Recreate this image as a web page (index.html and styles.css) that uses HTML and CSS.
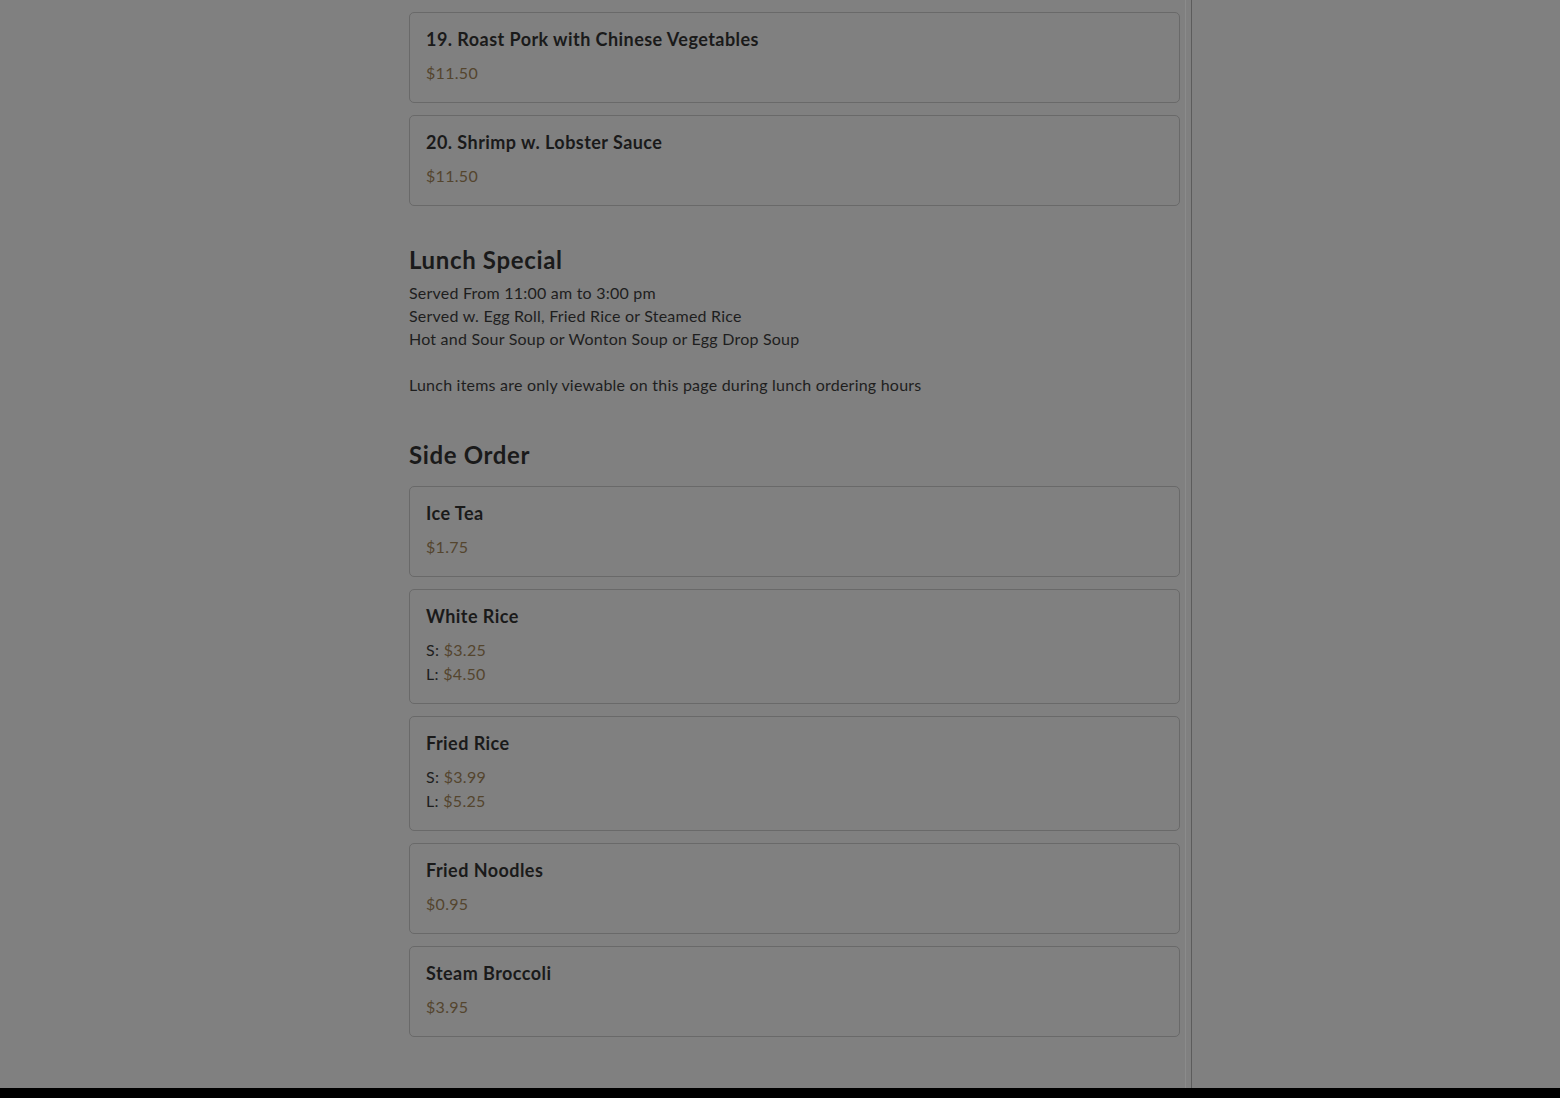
FILE: index.html
```html
<!DOCTYPE html>
<html lang="en">
<head>
<meta charset="utf-8">
<title>Menu</title>
<link rel="stylesheet" href="styles.css">
</head>
<body>
<div class="page">
  <main class="main">
    <div class="content">
      <div class="items">
        <div class="card">
          <div class="title">19. Roast Pork with Chinese Vegetables</div>
          <div class="price">$11.50</div>
        </div>
        <div class="card">
          <div class="title">20. Shrimp w. Lobster Sauce</div>
          <div class="price">$11.50</div>
        </div>
      </div>

      <section class="section lunch">
        <h2 class="heading">Lunch Special</h2>
        <p class="desc">Served From 11:00 am to 3:00 pm<br>Served w. Egg Roll, Fried Rice or Steamed Rice<br>Hot and Sour Soup or Wonton Soup or Egg Drop Soup<br><br>Lunch items are only viewable on this page during lunch ordering hours</p>
      </section>

      <section class="section side">
        <h2 class="heading">Side Order</h2>
        <div class="items">
          <div class="card">
            <div class="title">Ice Tea</div>
            <div class="price">$1.75</div>
          </div>
          <div class="card">
            <div class="title">White Rice</div>
            <div class="price"><span class="size">S:</span> $3.25</div>
            <div class="price"><span class="size">L:</span> $4.50</div>
          </div>
          <div class="card">
            <div class="title">Fried Rice</div>
            <div class="price"><span class="size">S:</span> $3.99</div>
            <div class="price"><span class="size">L:</span> $5.25</div>
          </div>
          <div class="card">
            <div class="title">Fried Noodles</div>
            <div class="price">$0.95</div>
          </div>
          <div class="card">
            <div class="title">Steam Broccoli</div>
            <div class="price">$3.95</div>
          </div>
        </div>
      </section>
    </div>
  </main>
  <aside class="sidebar"></aside>
</div>
<footer class="footer"></footer>
</body>
</html>
```

FILE: styles.css
```css
html, body {
  margin: 0;
  padding: 0;
}
body {
  background: #808080;
  font-family: "Lato", "Noto Sans", sans-serif;
  color: #1e1e1e;
  height: 1098px;
  display: flex;
  flex-direction: column;
  overflow: hidden;
}
.page {
  flex: 1;
  display: flex;
  min-height: 0;
}
.main {
  width: 1186px;
  border-right: 1px solid #8b8b8b;
  box-sizing: border-box;
}
.content {
  margin-left: 409px;
  width: 771px;
  padding-top: 12px;
}
.items {
  display: flex;
  flex-direction: column;
  gap: 12px;
}
.card {
  border: 1px solid #696969;
  border-radius: 5px;
  padding: 15px 16px 17px;
}
.title {
  font-size: 18px;
  font-weight: 700;
  line-height: 23px;
  letter-spacing: 0.45px;
  color: #1a1a1a;
  margin-bottom: 10px;
}
.price {
  font-size: 16px;
  line-height: 24px;
  letter-spacing: 0.3px;
  color: #54452e;
}
.size {
  color: #1e1e1e;
}
.section {
  margin: 0;
}
.heading {
  font-size: 24px;
  line-height: 30px;
  font-weight: 700;
  letter-spacing: 0.65px;
  color: #1a1a1a;
  margin: 0;
}
.lunch {
  margin-top: 39px;
}
.lunch .heading {
  margin-bottom: 6px;
}
.desc {
  margin: 0;
  font-size: 16px;
  line-height: 23px;
  letter-spacing: 0.22px;
  color: #1e1e1e;
}
.side {
  margin-top: 44px;
}
.side .heading {
  margin-bottom: 16px;
}
.sidebar {
  margin-left: 5px;
  flex: 1;
  border-left: 1px solid #5c5c5c;
}
.footer {
  height: 10px;
  background: #000;
}
```
